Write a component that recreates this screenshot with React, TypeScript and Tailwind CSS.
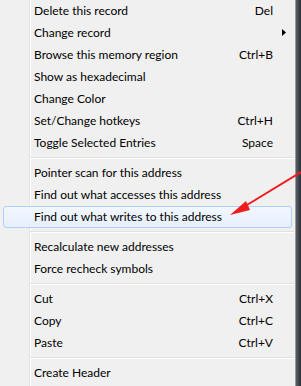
import React from "react";

type Entry =
  | { kind: "item"; label: string; shortcut?: string; submenu?: boolean; hover?: boolean }
  | { kind: "sep" };

const entries: Entry[] = [
  { kind: "item", label: "Delete this record", shortcut: "Del" },
  { kind: "item", label: "Change record", submenu: true },
  { kind: "item", label: "Browse this memory region", shortcut: "Ctrl+B" },
  { kind: "item", label: "Show as hexadecimal" },
  { kind: "item", label: "Change Color" },
  { kind: "item", label: "Set/Change hotkeys", shortcut: "Ctrl+H" },
  { kind: "item", label: "Toggle Selected Entries", shortcut: "Space" },
  { kind: "sep" },
  { kind: "item", label: "Pointer scan for this address" },
  { kind: "item", label: "Find out what accesses this address" },
  { kind: "item", label: "Find out what writes to this address", hover: true },
  { kind: "sep" },
  { kind: "item", label: "Recalculate new addresses" },
  { kind: "item", label: "Force recheck symbols" },
  { kind: "sep" },
  { kind: "item", label: "Cut", shortcut: "Ctrl+X" },
  { kind: "item", label: "Copy", shortcut: "Ctrl+C" },
  { kind: "item", label: "Paste", shortcut: "Ctrl+V" },
  { kind: "sep" },
  { kind: "item", label: "Create Header" },
];

function Row({ e }: { e: Extract<Entry, { kind: "item" }> }) {
  return (
    <div className="relative flex h-[22px] items-center pl-[34px] pr-[22px]">
      {e.hover && (
        <div className="absolute inset-x-[3px] inset-y-0 rounded-[3px] border border-[#aecff7] bg-gradient-to-b from-[#f2f7fe] to-[#e6effb]" />
      )}
      <span className="relative flex-1 whitespace-nowrap">{e.label}</span>
      {e.shortcut && <span className="relative whitespace-nowrap">{e.shortcut}</span>}
      {e.submenu && (
        <svg className="absolute right-[9px] top-[7px]" width="4" height="7" viewBox="0 0 4 7">
          <path d="M0 0 L4 3.5 L0 7 Z" fill="#000" />
        </svg>
      )}
    </div>
  );
}

export default function App() {
  return (
    <div className="relative flex h-[386px] w-[301px] overflow-hidden bg-[#f0f0f0]">
      <div className="relative w-[296px] border-r border-[#9a9a9a] bg-[#f0f0f0] font-['Lato',sans-serif] text-[12px] text-black">
        {/* icon gutter edge */}
        <div className="absolute inset-y-0 left-[29px] w-[2px] border-l border-[#e2e3e3] bg-white" />
        <div className="relative flex flex-col">
          {entries.map((e, i) =>
            e.kind === "sep" ? (
              <div key={i} className="flex h-[8px] items-center pl-[30px] pr-[1px]">
                <div className="h-[2px] w-full border-t border-[#e0e0e0] bg-white" />
              </div>
            ) : (
              <Row key={i} e={e} />
            )
          )}
        </div>
      </div>
      <div className="flex-1 bg-gradient-to-r from-[#5a6068] to-[#2a3038]" />
      {/* annotation arrow */}
      <svg className="absolute left-0 top-0" width="301" height="386" viewBox="0 0 301 386">
        <line x1="301" y1="172" x2="242" y2="208" stroke="#ee1c1c" strokeWidth="2" />
        <path d="M230 215 L246 201 L250 210 Z" fill="#ee1c1c" />
      </svg>
    </div>
  );
}
